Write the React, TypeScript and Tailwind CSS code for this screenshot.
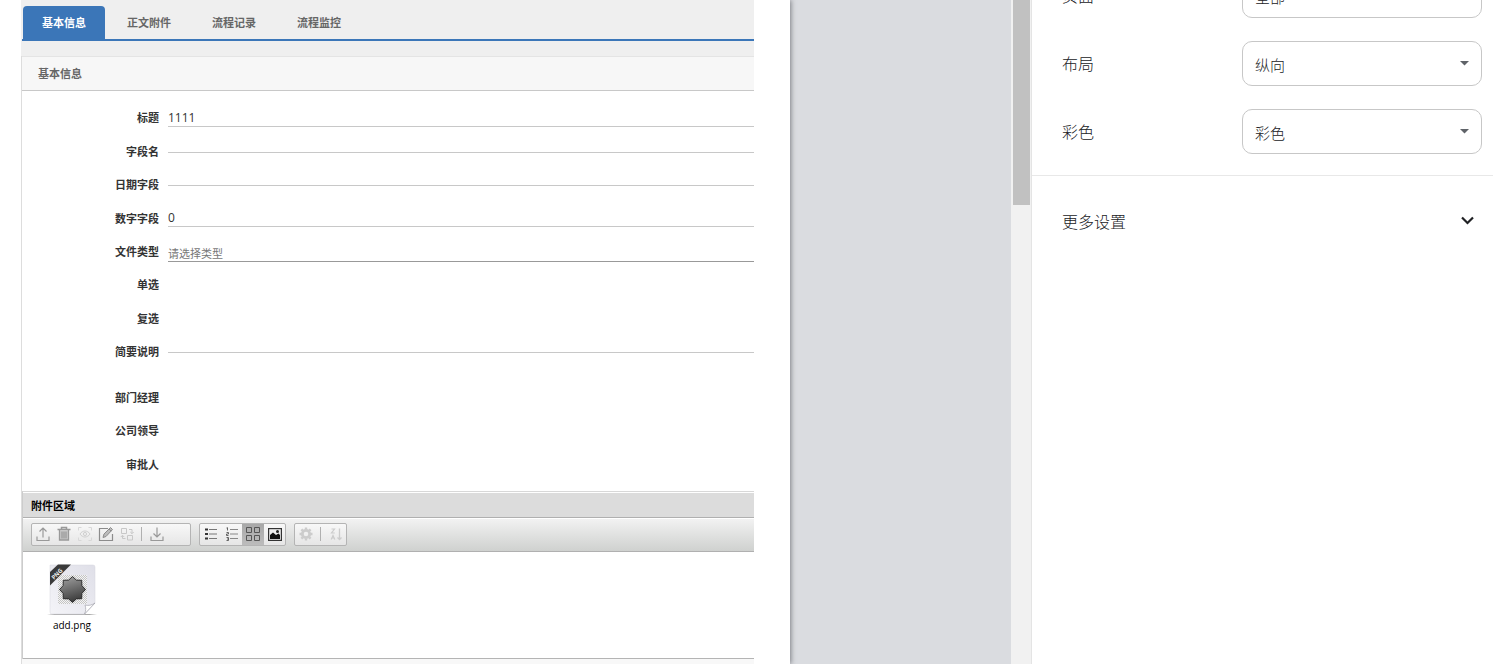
import { useState } from 'react';
import type { ReactNode } from 'react';

interface Field {
  id: string;
  label: string;
  kind: 'text' | 'empty' | 'picker' | 'none';
  value?: string;
}

const TABS = ['基本信息', '正文附件', '流程记录', '流程监控'];

const FIELDS: Field[] = [
  { id: 'title', label: '标题', kind: 'text', value: '1111' },
  { id: 'name', label: '字段名', kind: 'empty' },
  { id: 'date', label: '日期字段', kind: 'empty' },
  { id: 'number', label: '数字字段', kind: 'text', value: '0' },
  { id: 'fileType', label: '文件类型', kind: 'picker' },
  { id: 'radio', label: '单选', kind: 'none' },
  { id: 'check', label: '复选', kind: 'none' },
  { id: 'summary', label: '简要说明', kind: 'empty' },
];

const APPROVERS: Field[] = [
  { id: 'manager', label: '部门经理', kind: 'none' },
  { id: 'leader', label: '公司领导', kind: 'none' },
  { id: 'approver', label: '审批人', kind: 'none' },
];

const SETTINGS = [
  { id: 'pages', label: '页面', options: ['全部', '自定义'] },
  { id: 'layout', label: '布局', options: ['纵向', '横向'] },
  { id: 'color', label: '彩色', options: ['彩色', '黑白'] },
];

// ── Form ──

function FieldControl({ field }: { field: Field }) {
  const base = 'block w-full bg-transparent outline-none border-b text-[#333]';
  switch (field.kind) {
    case 'text':
      return <input id={field.id} defaultValue={field.value} className={`${base} h-4 border-[#c8c8c8] text-xs`} />;
    case 'empty':
      return <input id={field.id} className={`${base} h-px border-[#c8c8c8] text-xs`} />;
    case 'picker':
      return (
        <input
          id={field.id}
          placeholder="请选择类型"
          className={`${base} h-5 border-[#999] pt-1 text-[11px] placeholder-[#777]`}
        />
      );
    default:
      return null;
  }
}

function FieldRow({ field }: { field: Field }) {
  const labelClass = 'w-[137px] shrink-0 text-right text-[11px] font-bold text-[#333]';
  return (
    <div className="flex items-center gap-[9px]">
      {field.kind === 'none' ? (
        <span className={labelClass}>{field.label}</span>
      ) : (
        <label htmlFor={field.id} className={labelClass}>
          {field.label}
        </label>
      )}
      <div className="flex-1">
        <FieldControl field={field} />
      </div>
    </div>
  );
}

// ── Attachment toolbar ──

function ToolButton({ label, active, children }: { label: string; active?: boolean; children: ReactNode }) {
  return (
    <button
      aria-label={label}
      className={`flex h-full items-center justify-center ${
        active ? 'w-[22px] bg-linear-to-b from-[#a8a8a8] to-[#bcbcbc]' : 'w-[21px]'
      }`}
    >
      <svg width="16" height="16" viewBox="0 0 16 16" fill="none">
        {children}
      </svg>
    </button>
  );
}

function ToolGroup({ children, className = '' }: { children: ReactNode; className?: string }) {
  return (
    <div
      className={`flex h-[23px] items-center rounded-xs border border-[#b4b4b4] bg-linear-to-b from-[#f8f8f8] to-[#e6e6e6] ${className}`}
    >
      {children}
    </div>
  );
}

function Separator() {
  return <span className="mx-1 h-[14px] w-px bg-[#b0b0b0]" />;
}

function Toolbar() {
  return (
    <div className="flex h-[34px] items-center gap-2 border-t border-b border-t-white border-b-[#b0b0b0] bg-linear-to-b from-[#f2f2f2] to-[#cfd1cf] px-2 pb-[2px]">
      <ToolGroup className="w-[160px]">
        <ToolButton label="上传">
          <path d="M8 11.5V2M4.5 5.5L8 2l3.5 3.5M2 10.5v4h12v-4" stroke="#999" strokeWidth="1.2" />
        </ToolButton>
        <ToolButton label="删除">
          <path d="M1.5 3.5h13M5.5 3V1.5h5V3" stroke="#999" strokeWidth="1.5" />
          <path d="M3.5 4v10h9V4" stroke="#999" strokeWidth="1.3" fill="#c8c8c8" />
          <path d="M6 5.5v7M8 5.5v7M10 5.5v7" stroke="#8c8c8c" />
        </ToolButton>
        <ToolButton label="预览">
          <path d="M1.5 4.5v-3h3M11.5 1.5h3v3M14.5 11.5v3h-3M4.5 14.5h-3v-3" stroke="#d8d8d8" />
          <path d="M3 8c2.5-4 7.5-4 10 0c-2.5 4-7.5 4-10 0z" stroke="#d0d0d0" />
          <circle cx="8" cy="8" r="1.6" stroke="#d0d0d0" />
        </ToolButton>
        <ToolButton label="编辑">
          <path d="M10 2.5H1.5v12h13V8" stroke="#8c8c8c" strokeWidth="1.2" />
          <path d="M5 11.5l1-3.5L12.5 1.5l2 2L8 10.500z" stroke="#8c8c8c" fill="#bbb" />
          <path d="M11 3l2.2 2.2" stroke="#8c8c8c" />
        </ToolButton>
        <ToolButton label="替换">
          <path
            d="M2.5 2.5h5v5h-5zM8.5 9.5h5v4.5h-5zM10 3.500h3v4M11.3 6l1.7 1.7L14.7 6M6.5 12.5h-3v-3M1.8 11l1.7-1.7L5.2 11"
            stroke="#c8c8c8"
          />
        </ToolButton>
        <Separator />
        <ToolButton label="下载">
          <path d="M8 1.5V11M4.5 7.5L8 11l3.5-3.5M2 10.5v4h12v-4" stroke="#999" strokeWidth="1.2" />
        </ToolButton>
      </ToolGroup>

      <ToolGroup>
        <ToolButton label="列表">
          <path d="M2 3.5h3M2 8h3M2 12.5h3" stroke="#333" strokeWidth="2" />
          <path d="M6 3.5h8M6 8h8M6 12.5h8" stroke="#777" strokeWidth="1.2" />
        </ToolButton>
        <ToolButton label="编号列表">
          <path
            d="M3.5 1.5v3M2.5 2h1M2.5 6.5h2v1.500h-2v1.5h2M2.5 11.5h2v3h-2M3 13h1.5"
            stroke="#555"
            strokeWidth="0.9"
          />
          <path d="M6 3.5h8M6 8h8M6 12.5h8" stroke="#888" strokeWidth="1.2" />
        </ToolButton>
        <ToolButton label="缩略图" active>
          <path d="M1.5 1.5h5v5h-5zM9.5 1.5h5v5h-5zM1.5 9.5h5v5h-5zM9.5 9.5h5v5h-5z" stroke="#555" />
        </ToolButton>
        <ToolButton label="图片">
          <rect x="1.6" y="2.6" width="12.8" height="11.8" fill="#eee" stroke="#333" strokeWidth="1.2" />
          <path d="M3 13V9l3-2.500 3 2.500 2.500-1.500L13 9v4z" fill="#111" />
          <circle cx="10.5" cy="5.500" r="1.5" fill="#222" />
        </ToolButton>
      </ToolGroup>

      <ToolGroup>
        <ToolButton label="设置">
          <circle cx="8" cy="8" r="3.7" stroke="#ccc" strokeWidth="2.8" />
          <path
            d="M8 1.5v2M8 12.5v2M1.5 8h2M12.5 8h2M3.4 3.4l1.5 1.5M11.1 11.1l1.5 1.5M3.4 12.6l1.5-1.5M11.1 4.9l1.5-1.5"
            stroke="#ccc"
            strokeWidth="2.4"
          />
        </ToolButton>
        <Separator />
        <ToolButton label="排序">
          <path d="M3.5 3h3L3.500 7h3.3M3.2 13.5L5 9.5l1.8 4M4 12h2" stroke="#ccc" strokeWidth="1.2" />
          <path d="M11.5 2.5v11M9.5 11.5l2 2 2-2" stroke="#ccc" strokeWidth="1.3" />
        </ToolButton>
      </ToolGroup>
    </div>
  );
}

function PngIcon() {
  return (
    <svg width="50" height="53" viewBox="0 0 50 53" className="block">
      <defs>
        <linearGradient id="paper" x1="1" y1="0" x2="0" y2="1">
          <stop offset="0" stopColor="#dfdfe8" />
          <stop offset="1" stopColor="#f4f4f8" />
        </linearGradient>
        <linearGradient id="star" x1="0" y1="0" x2="0.3" y2="1">
          <stop offset="0" stopColor="#a4a4a4" />
          <stop offset="1" stopColor="#3f3f3f" />
        </linearGradient>
        <linearGradient id="ground" x1="0" y1="0" x2="1" y2="0">
          <stop offset="0" stopColor="#aaa" stopOpacity="0" />
          <stop offset="0.15" stopColor="#aaa" />
          <stop offset="0.85" stopColor="#aaa" />
          <stop offset="1" stopColor="#aaa" stopOpacity="0" />
        </linearGradient>
        <pattern id="checks" width="2" height="2" patternUnits="userSpaceOnUse">
          <rect width="2" height="2" fill="#f4f4f4" />
          <rect width="1" height="1" fill="#c4c4c4" />
          <rect x="1" y="1" width="1" height="1" fill="#c4c4c4" />
        </pattern>
      </defs>
      <rect x="0" y="51" width="50" height="1" fill="url(#ground)" />
      <path d="M4 2h42q2 0 2 2v36L38 51H5q-2 0-2-2V2z" fill="url(#paper)" stroke="#d6d6de" strokeWidth="0.5" />
      <path d="M37.500 51c1.500-3 1.500-6 0.500-9c4 1 7 0 10-2z" fill="#fff" stroke="#a4a4ac" strokeWidth="0.7" />
      <rect x="11" y="12" width="29" height="29" fill="url(#checks)" />
      <path
        d="M25.5 13.5L29.4 17.1L34.7 17.3L34.9 22.6L38.5 26.5L34.9 30.4L34.7 35.7L29.4 35.9L25.5 39.5L21.6 35.9L16.3 35.7L16.1 30.4L12.5 26.5L16.1 22.6L16.3 17.3L21.6 17.1z"
        fill="url(#star)"
        stroke="#222"
        strokeWidth="0.9"
      />
      <path d="M11 1.500h13L3 22.500V9z" fill="#3a3a3a" />
      <text x="11.500" y="12.500" transform="rotate(-45 11.5 12.5)" textAnchor="middle" fontSize="6" fontWeight="700" fill="#eee">
        PNG
      </text>
    </svg>
  );
}

// ── Printed page ──

function Sheet() {
  const [tab, setTab] = useState(0);

  return (
    <div className="relative min-h-screen flex-1 bg-white pr-9 pl-[21px] shadow-[1px_0_5px_0_#7c7e84]">
      <header className="bg-[#efefef] pt-[6px] pb-[15px]">
        <nav className="ml-px flex gap-[3px] border-b-2 border-[#3b76b8] pl-px">
          {TABS.map((name, i) => (
            <button
              key={name}
              onClick={() => setTab(i)}
              className={`h-[33px] w-[82px] rounded-t pt-[2px] text-[11px] font-bold ${
                i === tab ? 'bg-[#3b76b8] text-white' : 'text-[#666]'
              }`}
            >
              {name}
            </button>
          ))}
        </nav>
      </header>

      <div className="border-l border-[#ddd]">
        <h2 className="h-[35px] border-t border-b border-t-[#e4e4e4] border-b-[#c8c8c8] bg-[#f7f7f7] pl-4 text-[11px] leading-[34px] font-bold text-[#666]">
          基本信息
        </h2>

        <form>
          <div className="grid h-[289px] auto-rows-fr pt-[11px] pb-[11px]">
            {FIELDS.map((field) => (
              <FieldRow key={field.id} field={field} />
            ))}
          </div>
          <div className="grid h-[111px] auto-rows-fr pt-px pb-[9px]">
            {APPROVERS.map((field) => (
              <FieldRow key={field.id} field={field} />
            ))}
          </div>
        </form>

        <section className="border-t border-l border-t-[#d8d8d8] border-l-[#ccc] pt-px">
          <h2 className="h-[25px] border-b border-[#b0b0b0] bg-[#dcdcdc] pl-2 text-[11px] leading-[25px] font-bold text-black">
            附件区域
          </h2>
          <Toolbar />
          <div className="h-[107px] border-b border-[#b4b4b4] px-6 pt-[11px]">
            <figure className="w-[50px]">
              <PngIcon />
              <figcaption className="mt-px text-center text-[10px] leading-4 text-black">add.png</figcaption>
            </figure>
          </div>
        </section>
        <div className="h-[5px] bg-[#f8f8f8]" />
      </div>
    </div>
  );
}

// ── Print settings ──

function SettingRow({ id, label, options }: { id: string; label: string; options: string[] }) {
  return (
    <div className="flex items-center justify-between">
      <label htmlFor={id} className="text-base font-light text-[#202124]">
        {label}
      </label>
      <div className="relative w-[240px]">
        <select
          id={id}
          className="block h-[45px] w-full appearance-none rounded-[10px] border border-[#c7c7c7] bg-white pt-1 pl-3 text-[15px] font-light text-[#202124] outline-none"
        >
          {options.map((option) => (
            <option key={option}>{option}</option>
          ))}
        </select>
        <svg className="pointer-events-none absolute top-5 right-[13px]" width="9" height="5" viewBox="0 0 9 5">
          <path d="M0 0h9L4.500 4.500z" fill="#5f6368" />
        </svg>
      </div>
    </div>
  );
}

function SettingsPanel() {
  return (
    <aside className="w-[462px] shrink-0 overflow-hidden border-l border-[#e4e4e4] bg-white">
      <div className="-mt-[27px] flex flex-col gap-[23px] border-b border-[#e8e8e8] pr-[11px] pb-[21px] pl-[30px]">
        {SETTINGS.map((s) => (
          <SettingRow key={s.id} {...s} />
        ))}
      </div>
      <button className="flex h-[92px] w-full items-center justify-between pr-[19px] pl-[30px] text-base font-light text-[#202124]">
        更多设置
        <svg width="13" height="9" viewBox="0 0 13 9" fill="none" className="mb-[3px]">
          <path d="M1 1.500l5.500 5.500L12 1.500" stroke="#202124" strokeWidth="2.200" />
        </svg>
      </button>
    </aside>
  );
}

export default function App() {
  return (
    <div className="flex h-screen overflow-hidden bg-white font-['Open_Sans','Noto_Sans_CJK_SC',sans-serif]">
      <main className="flex flex-1 overflow-hidden bg-[#dadce0] pr-[221px]">
        <Sheet />
      </main>
      <div className="w-5 shrink-0 bg-[#f1f1f1] pr-px pl-[2px]">
        <div className="h-[205px] bg-[#c1c1c1]" />
      </div>
      <SettingsPanel />
    </div>
  );
}
